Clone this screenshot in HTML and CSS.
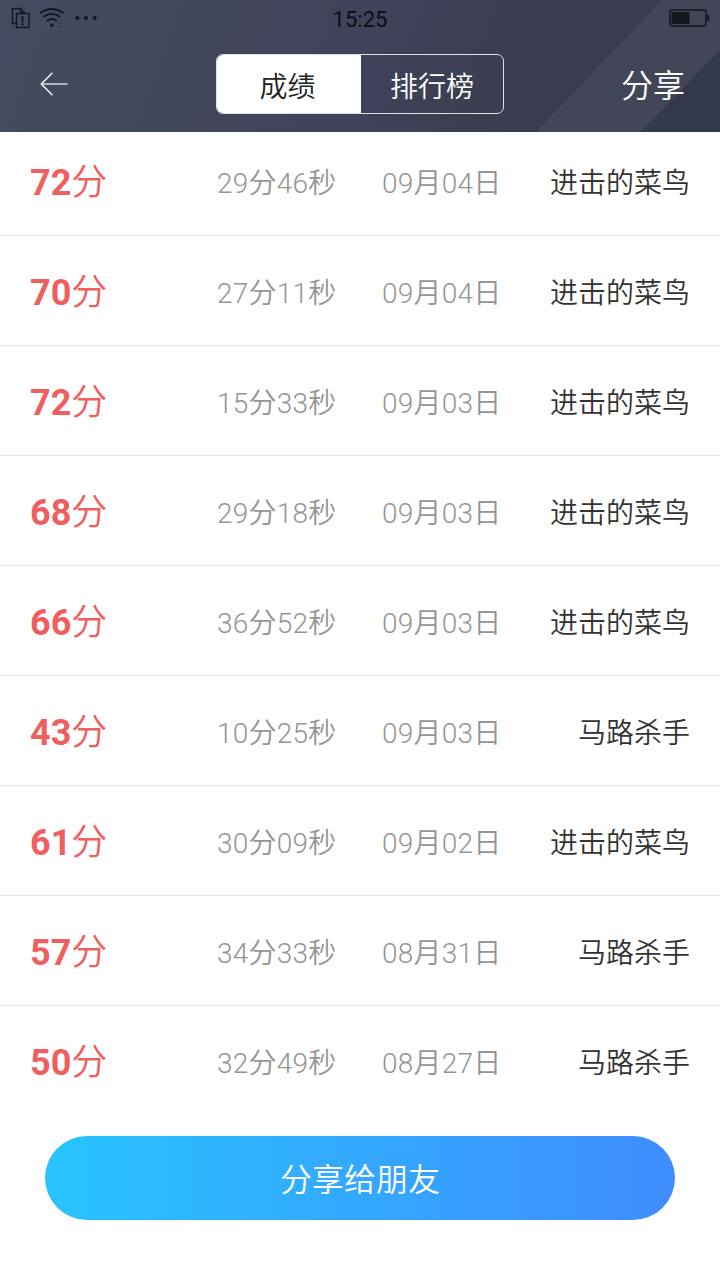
FILE: index.html
```html
<!DOCTYPE html>
<html lang="zh-CN">
<head>
    <meta charset="UTF-8">
    <meta name="viewport" content="width=device-width, initial-scale=1.0">
    <title>成绩</title>
    <link rel="stylesheet" href="styles.css">
</head>
<body>
    <header>
        <svg class="header-bg" viewBox="0 0 720 132">
            <polygon points="662,0 720,0 720,50 641,132 536,132" fill="#434659"/>
            <polygon points="720,50 720,132 641,132" fill="#34384c"/>
        </svg>
        <!-- Status bar -->
        <div class="status-bar">
            <svg class="status-icons" width="100" height="36" viewBox="0 0 100 36" fill="none" stroke="#15171f">
                <path d="M16 23.5H12.500V8.500H20.500L24.500 12.500V13" stroke-width="1.400"/>
                <path d="M20.500 8.500V12.500H24.500" stroke-width="1.200"/>
                <rect x="16.500" y="13.500" width="12.500" height="14" stroke-width="1.400"/>
                <path d="M22.500 16V22M22.500 23.300V25.300" stroke-width="2"/>
                <path d="M40 13.200Q51.800 4.800 63.600 13.200M43.300 17Q51.800 10.800 60.300 17M46.800 20.900Q51.800 17.200 56.800 20.900" stroke-width="1.900"/>
                <circle cx="51.700" cy="25.300" r="1.700" fill="#15171f" stroke="none"/>
                <path d="M59 23.700L60.700 22.200L62.400 23.700M59 25.700L60.700 27.200L62.400 25.700" stroke="#292d3c" stroke-width="1"/>
                <g fill="#15171f" stroke="none">
                    <circle cx="77.400" cy="18" r="2"/>
                    <circle cx="86" cy="18" r="2"/>
                    <circle cx="94.700" cy="18" r="2"/>
                </g>
            </svg>
            <span class="time">15:25</span>
            <svg class="battery" width="42" height="20" viewBox="0 0 42 20">
                <rect x="1" y="2" width="36" height="16" rx="1.500" fill="none" stroke="#1e202b" stroke-width="2"/>
                <rect x="2.500" y="4" width="18" height="12" fill="#15171f"/>
                <rect x="38" y="7" width="2.500" height="6" fill="#1e202b"/>
            </svg>
        </div>
        <!-- Title bar -->
        <nav>
            <a class="back" href="#">
                <svg width="28" height="24" viewBox="0 0 28 24" fill="none" stroke="#fff" stroke-linecap="round" stroke-linejoin="round">
                    <path d="M12 1.200L1.200 12L12 22.800" stroke-width="1.300"/>
                    <path d="M1.500 12H27" stroke="#d5d9df" stroke-width="1.600"/>
                </svg>
            </a>
            <div class="tabs">
                <a class="tab active" href="#">成绩</a>
                <a class="tab" href="#">排行榜</a>
            </div>
            <a class="share" href="#">分享</a>
        </nav>
    </header>

    <!-- Scores -->
    <div class="list">
        <div class="row">
            <div class="score"><b>72</b>分</div>
            <div class="used">29分46秒</div>
            <div class="date">09月04日</div>
            <div class="rank">进击的菜鸟</div>
        </div>
        <div class="row">
            <div class="score"><b>70</b>分</div>
            <div class="used">27分11秒</div>
            <div class="date">09月04日</div>
            <div class="rank">进击的菜鸟</div>
        </div>
        <div class="row">
            <div class="score"><b>72</b>分</div>
            <div class="used">15分33秒</div>
            <div class="date">09月03日</div>
            <div class="rank">进击的菜鸟</div>
        </div>
        <div class="row">
            <div class="score"><b>68</b>分</div>
            <div class="used">29分18秒</div>
            <div class="date">09月03日</div>
            <div class="rank">进击的菜鸟</div>
        </div>
        <div class="row">
            <div class="score"><b>66</b>分</div>
            <div class="used">36分52秒</div>
            <div class="date">09月03日</div>
            <div class="rank">进击的菜鸟</div>
        </div>
        <div class="row">
            <div class="score"><b>43</b>分</div>
            <div class="used">10分25秒</div>
            <div class="date">09月03日</div>
            <div class="rank">马路杀手</div>
        </div>
        <div class="row">
            <div class="score"><b>61</b>分</div>
            <div class="used">30分09秒</div>
            <div class="date">09月02日</div>
            <div class="rank">进击的菜鸟</div>
        </div>
        <div class="row">
            <div class="score"><b>57</b>分</div>
            <div class="used">34分33秒</div>
            <div class="date">08月31日</div>
            <div class="rank">马路杀手</div>
        </div>
        <div class="row">
            <div class="score"><b>50</b>分</div>
            <div class="used">32分49秒</div>
            <div class="date">08月27日</div>
            <div class="rank">马路杀手</div>
        </div>
    </div>

    <button class="share-button">分享给朋友</button>
</body>
</html>
```
FILE: styles.css
```css
* {
    box-sizing: border-box;
}
body {
    margin: 0;
    height: 1280px;
    overflow: hidden;
    background-color: #fff;
    font-family: Roboto, "Noto Sans CJK SC", sans-serif;
    font-weight: 350;
}
a {
    color: #fff;
    text-decoration: none;
}
header {
    position: relative;
    height: 132px;
    background: linear-gradient(110deg, #464b61 0%, #42465a 25%, #40425a 50%, #3a3c50 75%, #383b50 100%);
}
/* diagonal stripes behind the title bar */
.header-bg {
    position: absolute;
    top: 0;
    left: 0;
    width: 720px;
    height: 132px;
}
.status-bar, nav {
    position: relative;
    display: grid;
    align-items: center;
}
.status-bar {
    grid-template-columns: 1fr 100px 1fr;
    height: 36px;
}
.time {
    font-size: 22px;
    font-weight: 400;
    line-height: 32px;
    padding-top: 4px;
    text-align: center;
    color: #0c0d12;
}
.battery {
    justify-self: end;
    margin-right: 9px;
}
nav {
    grid-template-columns: 1fr 288px 1fr;
    height: 96px;
}
.back {
    display: flex;
    padding-left: 40px;
}
.tabs {
    display: flex;
    height: 60px;
    border: 1px solid #dfe0e5;
    border-radius: 7px;
    overflow: hidden;
}
.tab {
    flex: 1;
    font-size: 28px;
    line-height: 65px;
    text-align: center;
}
.tab.active {
    flex: 0 0 145px;
    margin-left: -1px;
    padding-right: 2px;
    background-color: #fff;
    color: #222;
}
.share {
    padding-right: 35px;
    padding-bottom: 2px;
    font-size: 32px;
    text-align: right;
}
.list {
    margin-top: 4px;
}
.row {
    display: grid;
    grid-template-columns: 187px 165px 1fr auto;
    align-items: center;
    height: 110px;
    padding: 6px 30px 0;
    border-bottom: 1px solid #e6e6e6;
    font-size: 28px;
    line-height: 40px;
    color: #959595;
}
.row:first-child {
    height: 100px;
    padding-top: 0;
    padding-bottom: 4px;
}
.row:last-child {
    border-bottom-color: transparent;
}
.used, .date {
    letter-spacing: 0.2px;
}
.score {
    padding-bottom: 1px;
    font-size: 36px;
    color: #ef5f5f;
}
.score b {
    font-weight: 700;
}
.rank {
    color: #333;
}
.share-button {
    display: block;
    width: 630px;
    height: 84px;
    margin: 20px auto 0;
    padding: 0 0 2px;
    border: none;
    border-radius: 42px;
    background: linear-gradient(to right, #28c4ff, #3f8cff);
    color: #fff;
    font-family: inherit;
    font-size: 32px;
    font-weight: 350;
}
```
